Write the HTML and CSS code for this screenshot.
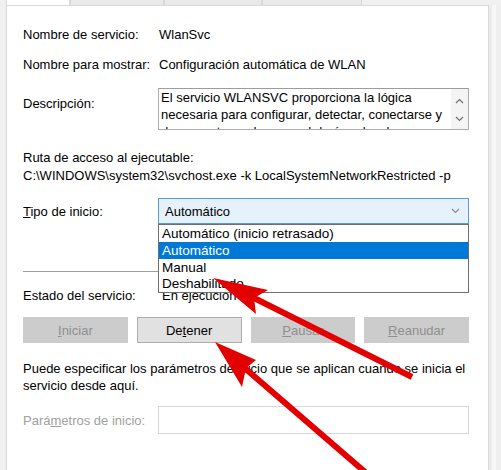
FILE: index.html
```html
<!DOCTYPE html>
<html lang="es">
<head>
<meta charset="utf-8">
<title>Propiedades de WLAN</title>
<link rel="stylesheet" href="styles.css">
</head>
<body>
<div class="tabs">
  <span class="tab tab-sel"></span>
  <span class="tab tab-a"></span>
  <span class="tab tab-b"></span>
  <span class="tab tab-c"></span>
</div>
<div class="frame">
  <div class="lstrip"></div>
  <div class="panel">
    <div class="row r1"><span class="lbl">Nombre de servicio:</span><span class="val">WlanSvc</span></div>
    <div class="row r2"><span class="lbl">Nombre para mostrar:</span><span class="val">Configuración automática de WLAN</span></div>
    <div class="row r3">
      <span class="lbl lbl-desc">Descripción:</span>
      <div class="desc">
        <div class="desc-text">El servicio WLANSVC proporciona la lógica<br>necesaria para configurar, detectar, conectarse y<br>desconectarse de una red de área local</div>
        <div class="scroll">
          <svg class="chev" width="9" height="6" viewBox="0 0 9 6"><path d="M1 5 L4.5 1.5 L8 5" fill="none" stroke="#707070" stroke-width="1.2"/></svg>
          <svg class="chev" width="9" height="6" viewBox="0 0 9 6"><path d="M1 1 L4.5 4.5 L8 1" fill="none" stroke="#707070" stroke-width="1.2"/></svg>
        </div>
      </div>
    </div>
    <div class="path">
      <div>Ruta de acceso al ejecutable:</div>
      <div class="path-val">C:\WINDOWS\system32\svchost.exe -k LocalSystemNetworkRestricted -p</div>
    </div>
    <div class="row r4">
      <span class="lbl"><u>T</u>ipo de inicio:</span>
      <div class="combo-wrap">
        <div class="combo"><span>Automático</span>
          <svg width="9" height="6" viewBox="0 0 9 6"><path d="M1 1 L4.5 4.5 L8 1" fill="none" stroke="#8a8a8a" stroke-width="1.1"/></svg>
        </div>
        <ul class="list">
          <li>Automático (inicio retrasado)</li>
          <li class="sel">Automático</li>
          <li>Manual</li>
          <li>Deshabilitado</li>
        </ul>
      </div>
    </div>
    <div class="sep"></div>
    <div class="row r5"><span class="lbl">Estado del servicio:</span><span class="val val-state">En ejecución</span></div>
    <div class="buttons">
      <span class="btn btn-dis"><u>I</u>niciar</span>
      <span class="btn">De<u>t</u>ener</span>
      <span class="btn btn-dis"><u>P</u>ausar</span>
      <span class="btn btn-dis"><u>R</u>eanudar</span>
    </div>
    <p class="note">Puede especificar los parámetros de inicio que se aplican cuando se inicia el<br>servicio desde aquí.</p>
    <div class="row r6"><span class="lbl lbl-dis">Pará<u>m</u>etros de inicio:</span><div class="input"></div></div>
  </div>
  <div class="rstrip"></div>
</div>
<svg class="arrows" width="501" height="470" viewBox="0 0 501 470">
  <line x1="412" y1="377" x2="248" y2="295" stroke="#e30000" stroke-width="6"/>
  <polygon points="213,278 268,290 254,298 256,314" fill="#e30000"/>
  <line x1="372" y1="478" x2="240" y2="364" stroke="#e30000" stroke-width="6"/>
  <polygon points="215,342 256,360 246,368 242,387" fill="#e30000"/>
</svg>
</body>
</html>
```

FILE: styles.css
```css
* { box-sizing: border-box; }
html, body { margin: 0; padding: 0; }
body {
  width: 501px;
  height: 470px;
  overflow: hidden;
  position: relative;
  background: #f0f0f0;
  font-family: "Liberation Sans", Arial, sans-serif;
  font-size: 13px;
  line-height: 17px;
  color: #000;
}
.tabs { display: flex; height: 5px; padding-left: 6px; }
.tab { display: block; height: 5px; border-left: 1px solid #d9d9d9; border-right: 1px solid #d9d9d9; background: #e9e9e9; }
.tab-sel { width: 64px; background: #fff; }
.tab-a { width: 94px; }
.tab-b { width: 98px; }
.tab-c { width: 100px; }

.frame { display: flex; height: 465px; }
.lstrip { width: 6px; background: #f0f0f0; }
.rstrip { width: 12px; background: linear-gradient(to right, #ececec 0 3px, #f7f7f7 3px 7px, #efefef 7px); }
.panel {
  flex: 1;
  background: #fff;
  border: 1px solid #d9d9d9;
  border-bottom: none;
  padding: 20px 19px 0 16px;
}

.row { display: grid; grid-template-columns: 135px 1fr; align-items: center; }
.val { padding-left: 1px; white-space: nowrap; }
.r2 { margin-top: 13px; }
.r3 { margin-top: 15px; align-items: start; }
.lbl-desc { padding-top: 7px; }
.desc {
  height: 42px;
  border: 1px solid #abadb3;
  border-top-color: #9a9ca3;
  display: flex;
  overflow: hidden;
}
.desc-text { flex: 1; padding: 0 2px; white-space: nowrap; overflow: hidden; }
.scroll {
  width: 17px;
  background: #f4f4f4;
  display: flex;
  flex-direction: column;
  align-items: center;
  padding-top: 9px;
  gap: 12px;
}
.chev { display: block; }

.path { margin-top: 19px; white-space: nowrap; }
.path-val { margin-top: 1px; }

.r4 { margin-top: 14px; }
.combo-wrap { position: relative; }
.combo {
  height: 26px;
  border: 1px solid #5a9ad9;
  background: #e5f1fb;
  display: flex;
  align-items: center;
  justify-content: space-between;
  padding: 0 8px 0 6px;
}
.combo svg { display: block; }
.list {
  position: absolute;
  top: 26px;
  left: 0;
  right: 0;
  margin: 0;
  padding: 0;
  list-style: none;
  background: #fff;
  border: 1px solid #6e6e6e;
  z-index: 2;
  font-size: 13.5px;
}
.list li { height: 16.75px; line-height: 17px; padding-left: 3px; white-space: nowrap; }
.list li.sel { background: #0078d7; color: #fff; }

.sep { margin-top: 47px; height: 2px; border-top: 1px solid #a0a0a0; border-bottom: 1px solid #fff; }
.r5 { margin-top: 14px; }
.val-state { padding-left: 4px; }

.buttons {
  margin-top: 13px;
  display: grid;
  grid-template-columns: repeat(4, 1fr);
  gap: 9px;
}
.btn {
  height: 26px;
  display: flex;
  align-items: center;
  justify-content: center;
  background: #e1e1e1;
  border: 1px solid #adadad;
}
.btn-dis { background: #cccccc; border-color: #cccccc; color: #8f8f8f; }

.note { margin: 17px 0 0; white-space: nowrap; }
.r6 { margin-top: 12px; }
.lbl-dis { color: #a0a0a0; }
.input { height: 28px; border: 1px solid #d6d6d6; }

.arrows { position: absolute; left: 0; top: 0; pointer-events: none; z-index: 5; }
```
